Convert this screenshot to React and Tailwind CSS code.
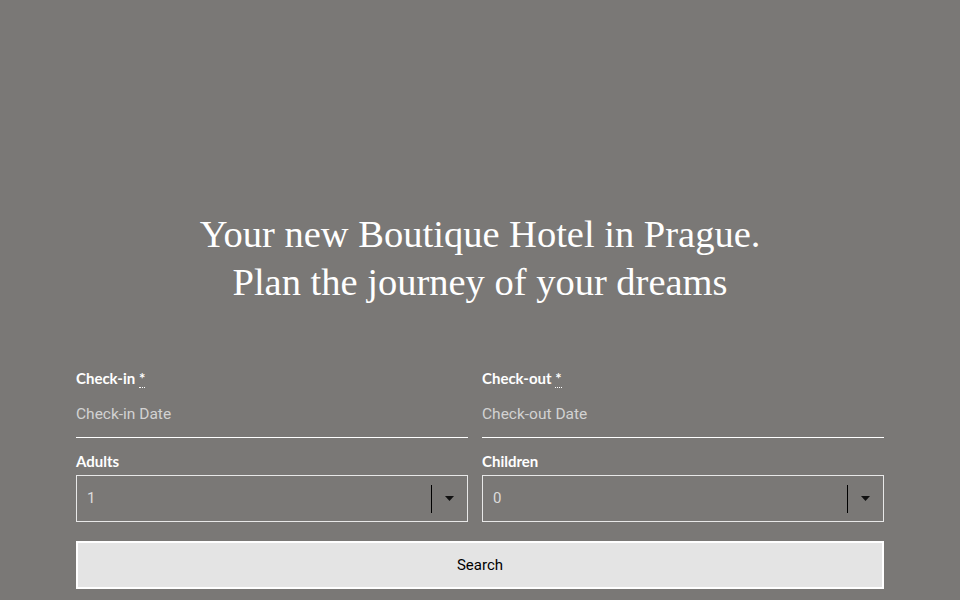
export default function App() {
  return (
    <div className="w-full h-[600px] bg-[#7a7876] overflow-hidden flex flex-col items-center">
      <h1
        className="mt-[210px] text-white text-center text-[38.5px] leading-[48px]"
        style={{ fontFamily: '"Liberation Serif", "DejaVu Serif", serif' }}
      >
        Your new Boutique Hotel in Prague.
        <br />
        Plan the journey of your dreams
      </h1>

      <form
        className="mt-[62px] w-[808px] grid grid-cols-[392px_402px] gap-x-[14px]"
        style={{ fontFamily: 'Lato, "Open Sans", sans-serif' }}
        onSubmit={(e) => e.preventDefault()}
      >
        {[
          { label: 'Check-in', ph: 'Check-in Date' },
          { label: 'Check-out', ph: 'Check-out Date' },
        ].map((f) => (
          <div key={f.label} className="flex flex-col">
            <label className="text-white text-[15px] font-bold leading-[20px] h-[20px]">
              {f.label}{' '}
              <abbr className="no-underline border-b border-dotted border-white" title="required">*</abbr>
            </label>
            <input
              type="text"
              placeholder={f.ph}
              className="mt-[14px] h-[24px] bg-transparent text-[15.5px] text-white placeholder:text-[#d2d2d2] focus:outline-none"
              style={{ fontFamily: 'Roboto, "Noto Sans", sans-serif' }}
            />
            <div className="mt-[11px] h-px bg-white" />
          </div>
        ))}

        {[
          { label: 'Adults', value: '1' },
          { label: 'Children', value: '0' },
        ].map((f) => (
          <div key={f.label} className="flex flex-col mt-[13px]">
            <label className="text-white text-[15px] font-bold leading-[20px]">{f.label}</label>
            <div className="mt-[4px] h-[47px] border border-[#e8e8e8] flex items-center">
              <span
                className="flex-1 pl-[10px] text-[15px] text-[#dcdcdc]"
                style={{ fontFamily: 'Roboto, "Noto Sans", sans-serif' }}
              >
                {f.value}
              </span>
              <div className="w-px h-[28px] bg-black" />
              <div className="w-[35px] flex justify-center">
                <svg width="9" height="5" viewBox="0 0 9 5">
                  <path d="M0 0h9L4.5 5z" fill="#111" />
                </svg>
              </div>
            </div>
          </div>
        ))}

        <button
          type="submit"
          className="col-span-2 mt-[19px] h-[48px] bg-[#e4e4e4] border-2 border-white text-black text-[15px]"
          style={{ fontFamily: 'Roboto, "Noto Sans", sans-serif' }}
        >
          Search
        </button>
      </form>
    </div>
  )
}
